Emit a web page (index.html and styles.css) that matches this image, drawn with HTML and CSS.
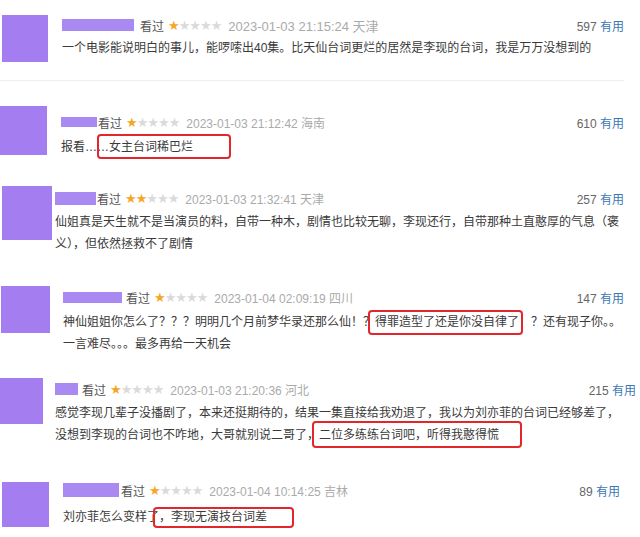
FILE: index.html
```html
<!DOCTYPE html>
<html lang="zh">
<head>
    <meta charset="UTF-8">
    <title>短评</title>
    <link rel="stylesheet" href="styles.css">
</head>
<body>
<div class="list">
    <div class="review r1">
        <div class="avatar"></div>
        <div class="main">
            <div class="head">
                <span class="name"></span>
                <span class="watched">看过</span>
                <span class="stars"><b>★</b>★★★★</span>
                <span class="time">2023-01-03 21:15:24 天津</span>
                <span class="votes">597 <a>有用</a></span>
            </div>
            <p class="text">一个电影能说明白的事儿，能啰嗦出40集。比天仙台词更烂的居然是李现的台词，我是万万没想到的</p>
        </div>
    </div>
    <div class="review r2">
        <div class="avatar"></div>
        <div class="main">
            <div class="head">
                <span class="name"></span>
                <span class="watched">看过</span>
                <span class="stars"><b>★</b>★★★★</span>
                <span class="time">2023-01-03 21:12:42 海南</span>
                <span class="votes">610 <a>有用</a></span>
            </div>
            <p class="text">报看……<span class="mark">女主台词稀巴烂</span></p>
        </div>
    </div>
    <div class="review r3">
        <div class="avatar"></div>
        <div class="main">
            <div class="head">
                <span class="name"></span>
                <span class="watched">看过</span>
                <span class="stars"><b>★★</b>★★★</span>
                <span class="time">2023-01-03 21:32:41 天津</span>
                <span class="votes">257 <a>有用</a></span>
            </div>
            <p class="text">仙姐真是天生就不是当演员的料，自带一种木，剧情也比较无聊，李现还行，自带那种土直憨厚的气息（褒<br>义），但依然拯救不了剧情</p>
        </div>
    </div>
    <div class="review r4">
        <div class="avatar"></div>
        <div class="main">
            <div class="head">
                <span class="name"></span>
                <span class="watched">看过</span>
                <span class="stars"><b>★</b>★★★★</span>
                <span class="time">2023-01-04 02:09:19 四川</span>
                <span class="votes">147 <a>有用</a></span>
            </div>
            <p class="text">神仙姐姐你怎么了？？？明明几个月前梦华录还那么仙！？<span class="mark">得罪造型了还是你没自律了</span>！？还有现子你。。<br>一言难尽。。。最多再给一天机会</p>
        </div>
    </div>
    <div class="review r5">
        <div class="avatar"></div>
        <div class="main">
            <div class="head">
                <span class="name"></span>
                <span class="watched">看过</span>
                <span class="stars"><b>★</b>★★★★</span>
                <span class="time">2023-01-03 21:20:36 河北</span>
                <span class="votes">215 <a>有用</a></span>
            </div>
            <p class="text">感觉李现几辈子没播剧了，本来还挺期待的，结果一集直接给我劝退了，我以为刘亦菲的台词已经够差了，<br>没想到李现的台词也不咋地，大哥就别说二哥了，<span class="mark">二位多练练台词吧，听得我憨得慌</span></p>
        </div>
    </div>
    <div class="review r6">
        <div class="avatar"></div>
        <div class="main">
            <div class="head">
                <span class="name"></span>
                <span class="watched">看过</span>
                <span class="stars"><b>★</b>★★★★</span>
                <span class="time">2023-01-04 10:14:25 吉林</span>
                <span class="votes">89 <a>有用</a></span>
            </div>
            <p class="text">刘亦菲怎么变样了<span class="mark">，李现无演技台词差</span></p>
        </div>
    </div>
</div>
</body>
</html>
```

FILE: styles.css
```css
body {
    margin: 0;
    background-color: #fff;
    color: #3a3a3a;
    font-family: "Liberation Sans", "Noto Sans CJK SC", sans-serif;
}
.review {
    display: flex;
    box-sizing: border-box;
    width: var(--w);
    height: var(--h);
    padding-top: var(--pt);
    padding-left: var(--ax);
}
.avatar {
    flex: none;
    width: var(--aw);
    height: var(--ah);
    margin-right: var(--gap);
    background-color: #a47ef0;
}
.main {
    flex: 1;
    min-width: 0;
}
.head {
    display: flex;
    align-items: center;
    height: 20px;
    margin-top: var(--hy);
    font-size: 12px;
    white-space: nowrap;
}
.name {
    width: var(--nw);
    height: var(--nh);
    margin-right: var(--ng);
    background-color: #a98af2;
}
.watched {
    color: #555;
}
.stars {
    margin: 0 7px 0 4px;
    font-family: "DejaVu Sans", sans-serif;
    font-size: 13px;
    letter-spacing: -1px;
    color: #dadada;
}
.stars b {
    font-weight: normal;
    color: #f5a623;
}
.time {
    color: #aaa;
}
.votes {
    margin-left: auto;
    color: #666;
}
.votes a {
    color: #3b77b5;
}
.text {
    margin: var(--ty) 0 0;
    font-size: 12px;
    line-height: 22px;
    white-space: nowrap;
}
.mark {
    position: relative;
}
.mark::after {
    content: "";
    position: absolute;
    top: var(--mt);
    bottom: var(--mb);
    left: var(--ml);
    right: var(--mr);
    border: 2px solid #e3262b;
    border-radius: 4px;
}

/* each row comes from a different screenshot */
.r1 {
    --w: 624px; --h: 81px; --pt: 15px;
    --ax: 2px; --aw: 46px; --ah: 47px; --gap: 14px;
    --nw: 72px; --nh: 12px; --ng: 6px; --hy: 0px; --ty: 2px;
    border-bottom: 1px solid #eee;
}
.r1 .time {
    font-size: 13px;
}
.r2 {
    --w: 624px; --h: 99px; --pt: 25px;
    --ax: 0px; --aw: 47px; --ah: 49px; --gap: 14px;
    --nw: 36px; --nh: 10px; --ng: 1px; --hy: 6px; --ty: 4px;
    --mt: -6px; --mb: -5px; --ml: -12px; --mr: -38px;
}
.r3 {
    --w: 624px; --h: 95px; --pt: 6px;
    --ax: 2px; --aw: 50px; --ah: 54px; --gap: 3px;
    --nw: 41px; --nh: 13px; --ng: 1px; --hy: 2px; --ty: 3px;
}
.r4 {
    --w: 624px; --h: 95px; --pt: 11px;
    --ax: 1px; --aw: 49px; --ah: 47px; --gap: 13px;
    --nw: 59px; --nh: 11px; --ng: 4px; --hy: 1px; --ty: 4px;
    --mt: -5px; --mb: -6px; --ml: -7px; --mr: -4px;
}
.r5 {
    --w: 636px; --h: 105px; --pt: 8px;
    --ax: 0px; --aw: 43px; --ah: 46px; --gap: 12px;
    --nw: 23px; --nh: 12px; --ng: 4px; --hy: 1px; --ty: 3px;
    --mt: -7px; --mb: -6px; --ml: -7px; --mr: -23px;
}
.r6 {
    --w: 620px; --h: 62px; --pt: 7px;
    --ax: 2px; --aw: 47px; --ah: 45px; --gap: 14px;
    --nw: 56px; --nh: 14px; --ng: 2px; --hy: -2px; --ty: 6px;
    --mt: -3px; --mb: -4px; --ml: -6px; --mr: -27px;
}
```
